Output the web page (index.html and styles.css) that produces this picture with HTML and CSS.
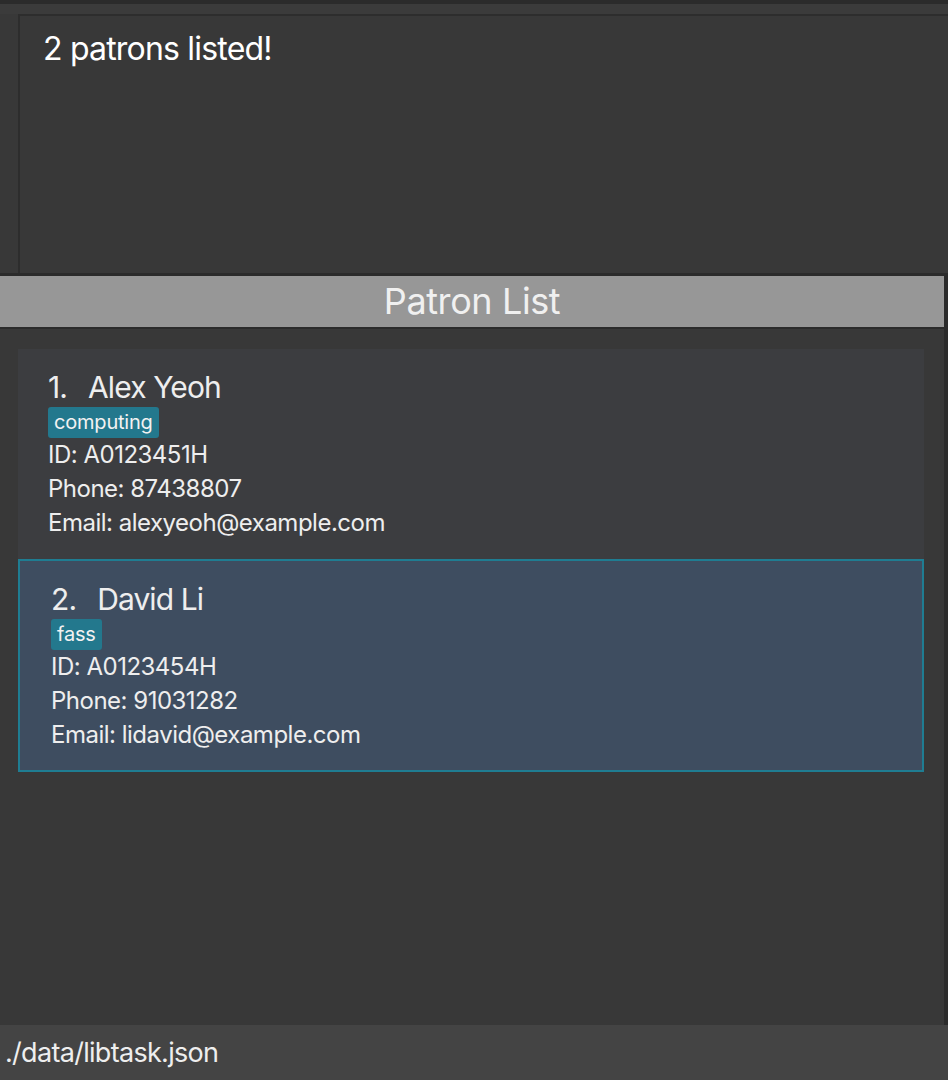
FILE: index.html
```html
<!DOCTYPE html>
<html>
<head>
<meta charset="utf-8">
<link rel="stylesheet" href="styles.css">
</head>
<body>
<div class="app">
  <div class="topbar"></div>
  <div class="cmd"></div>
  <div class="result">
    <div class="result-box">2 patrons listed!</div>
  </div>
  <div class="list-panel">
    <div class="list-header">Patron List</div>
    <div class="list">
      <div class="card">
        <div class="name"><span class="idx">1.</span>Alex Yeoh</div>
        <div class="tags"><span class="tag">computing</span></div>
        <div class="field">ID: A0123451H</div>
        <div class="field">Phone: 87438807</div>
        <div class="field">Email: alexyeoh@example.com</div>
      </div>
      <div class="card selected">
        <div class="name"><span class="idx">2.</span>David Li</div>
        <div class="tags"><span class="tag">fass</span></div>
        <div class="field">ID: A0123454H</div>
        <div class="field">Phone: 91031282</div>
        <div class="field">Email: lidavid@example.com</div>
      </div>
    </div>
  </div>
  <div class="status">./data/libtask.json</div>
</div>
</body>
</html>
```

FILE: styles.css
```css
* { box-sizing: border-box; }
html, body {
  margin: 0;
  padding: 0;
  background: #383838;
}
body {
  font-family: Inter, "Open Sans", sans-serif;
  color: #eeeeee;
}
.app {
  width: 948px;
  height: 1080px;
  display: flex;
  flex-direction: column;
  overflow: hidden;
}
.topbar {
  height: 4px;
  background: #2b2b2b;
  flex: none;
}
.cmd {
  height: 10px;
  background: #3b3b3b;
  flex: none;
}
.result {
  height: 259px;
  flex: none;
  padding-left: 18px;
}
.result-box {
  height: 100%;
  border-top: 2px solid #2d2d2d;
  border-left: 2px solid #2d2d2d;
  background: #383838;
  padding: 13px 0 0 23px;
  font-size: 32px;
  letter-spacing: -0.8px;
  color: #ffffff;
}
.list-panel {
  flex: 1;
  display: flex;
  flex-direction: column;
  border-right: 4px solid #2b2b2b;
  border-top: 3px solid #2b2b2b;
}
.list-header {
  height: 53px;
  flex: none;
  background: #979797;
  border-bottom: 2px solid #2b2b2b;
  text-align: center;
  font-size: 36px;
  line-height: 51px;
  color: #f0f0f0;
  letter-spacing: -0.4px;
}
.list {
  padding: 20px 20px 0 18px;
  display: flex;
  flex-direction: column;
}
.card {
  height: 210px;
  background: #3c3d40;
  padding: 21px 0 0 30px;
}
.card.selected {
  height: 213px;
  background: #3e4d60;
  border: 2px solid #1f7d92;
  padding: 21px 0 0 31px;
}
.name {
  font-size: 30px;
  line-height: 34px;
  color: #eeeeee;
  letter-spacing: -0.9px;
}
.idx {
  margin-right: 21px;
}
.tags {
  margin-top: 3px;
  height: 31px;
  display: flex;
}
.tag {
  background: #23788d;
  color: #f2f2f2;
  font-size: 20px;
  line-height: 31px;
  padding: 0 6px;
  border-radius: 3px;
  letter-spacing: -0.2px;
}
.field {
  font-size: 24px;
  line-height: 34px;
  letter-spacing: -0.5px;
}
.status {
  height: 55px;
  flex: none;
  background: #444444;
  font-size: 27px;
  line-height: 55px;
  padding-left: 5px;
  letter-spacing: -0.7px;
  color: #eeeeee;
}
```
